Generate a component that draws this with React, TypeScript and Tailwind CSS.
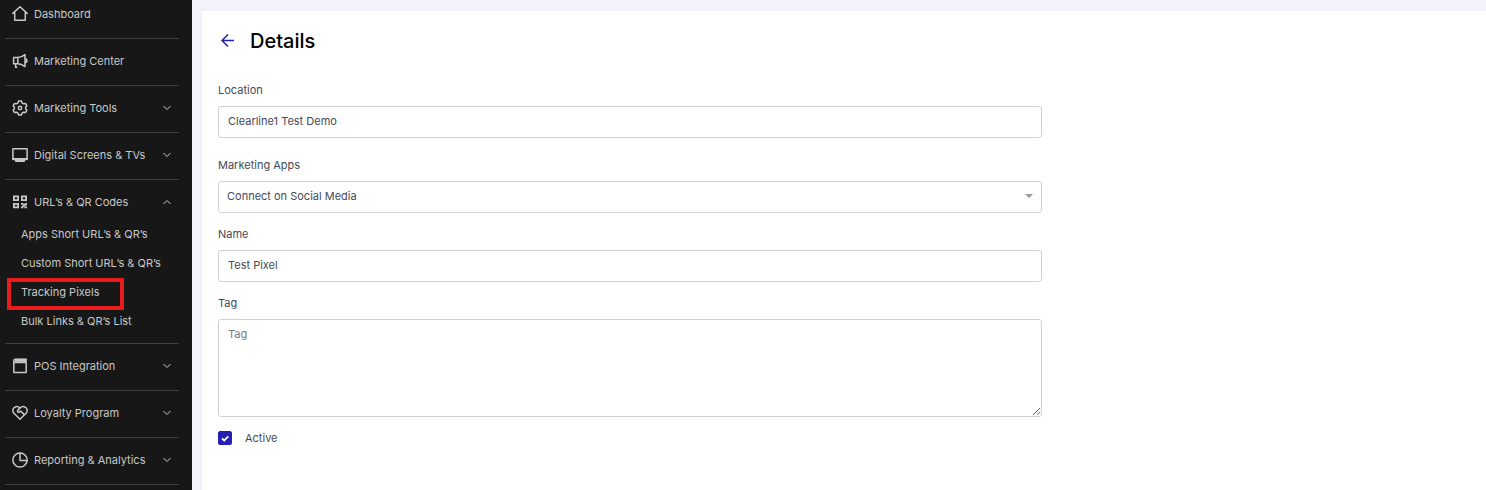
import { useState } from 'react';
import type { ReactNode } from 'react';

const Icon = ({ children }: { children: ReactNode }) => (
  <svg
    viewBox="0 0 16 16"
    className="size-4 shrink-0"
    fill="none"
    stroke="currentColor"
    strokeWidth="1.5"
    strokeLinecap="round"
    strokeLinejoin="round"
    aria-hidden="true"
  >
    {children}
  </svg>
);

const HouseIcon = () => (
  <Icon>
    <path d="M0.8 7.4 8 0.8l7.2 6.6M2.7 6v8.3h10.6V6" />
  </Icon>
);

const MegaphoneIcon = () => (
  <Icon>
    <path d="M1.6 4.4h4.2v6.4H1.6zM5.8 4.4c3 0 5.2-1.2 7.2-2.8v12c-2-1.6-4.2-2.8-7.2-2.8M13 5.8a1.9 1.9 0 0 1 0 3.8M3.6 10.8v3.4h1.2" />
  </Icon>
);

const GearIcon = () => (
  <Icon>
    <path d="M6.6 1h2.8l.6 1.9 1.5.9 2-.4 1.4 2.4-1.3 1.4v1.6l1.3 1.4-1.4 2.4-2-.4-1.5.9-.6 1.9H6.6L6 13.1l-1.5-.9-2 .4-1.4-2.4 1.3-1.4V7.2L1.1 5.8l1.4-2.4 2 .4L6 2.9z" />
    <circle cx="8" cy="8" r="1.7" />
  </Icon>
);

const ScreenIcon = () => (
  <Icon>
    <path d="M0.9 1.7h14.2v10.6H.9z" />
    <path d="M1.4 12.2h13.2M4 14h8" strokeWidth="2.2" />
  </Icon>
);

const QrIcon = () => (
  <Icon>
    <g strokeWidth="1.8" strokeLinejoin="miter" strokeLinecap="butt">
      <path d="M1.9 2.4h4.2v3.8H1.9zM9.9 2.4h4.2v3.8H9.9zM1.9 9.8h4.2v3.6H1.9z" />
      <path d="M9 9.9h2.6M14.1 9v2.4M9.4 14l4.8-4.6M12.4 13.4H15M11 11.5h2" />
    </g>
  </Icon>
);

const RegisterIcon = () => (
  <Icon>
    <path d="M1.8 4.6h12.4v9.8H1.8zM1.8 4.6V3.2c0-1.2.6-1.9 1.6-1.9h10.8" />
    <path d="M3 2.4h11.8" strokeWidth="3" strokeLinecap="butt" />
  </Icon>
);

const HeartIcon = () => (
  <Icon>
    <path d="M8 14.2 1.5 7.8C.3 6 .7 3.5 2.5 2.4 4.3 1.3 6.6 1.6 8 3c1.4-1.4 3.7-1.7 5.5-.6 1.8 1.1 2.2 3.6 1 5.4z" />
    <path d="M8 3 5.6 5.4c-.4 1 .3 2 1.4 1.9L8.600 6l3.600 3.600" />
  </Icon>
);

const PieIcon = () => (
  <Icon>
    <circle cx="8" cy="8" r="7.1" />
    <path d="M8 1v7.4h7" />
  </Icon>
);

const Chevron = ({ up }: { up?: boolean }) => (
  <svg
    viewBox="0 0 8 8"
    className="size-2 shrink-0"
    fill="none"
    stroke="currentColor"
    strokeWidth="1"
    aria-hidden="true"
  >
    <path d={up ? 'M0.5 6 4 2.5 7.5 6' : 'M0.5 2 4 5.5 7.5 2'} />
  </svg>
);

const rowClass = 'flex w-full items-center gap-[6px] pl-[7px] pr-2 text-left';

const LinkRow = ({ icon, label }: { icon: ReactNode; label: string }) => (
  <a href="#" className={rowClass}>
    {icon}
    {label}
  </a>
);

const MenuRow = ({
  icon,
  label,
  open,
  children,
}: {
  icon: ReactNode;
  label: string;
  open?: boolean;
  children?: ReactNode;
}) => {
  const [expanded, setExpanded] = useState(!!open);

  return (
    <>
      <button
        type="button"
        aria-expanded={expanded}
        onClick={() => setExpanded(!expanded)}
        className={rowClass}
      >
        {icon}
        <span className="flex-1">{label}</span>
        <Chevron up={expanded} />
      </button>
      {expanded && children}
    </>
  );
};

const itemClass = 'border-b border-[#404040] pt-[14px] pb-4';
const subLinkClass = 'flex h-[29px] items-center pl-4';

const SideBar = () => (
  <aside className="w-48 shrink-0 bg-[#171717] pr-[13px] pl-[5px] text-[11px] leading-4 text-[#c8c8c8]">
    <nav>
      <ul>
        <li className="border-b border-[#404040] pt-[6px] pb-4">
          <LinkRow icon={<HouseIcon />} label="Dashboard" />
        </li>
        <li className={itemClass}>
          <LinkRow icon={<MegaphoneIcon />} label="Marketing Center" />
        </li>
        <li className={itemClass}>
          <MenuRow icon={<GearIcon />} label="Marketing Tools" />
        </li>
        <li className={itemClass}>
          <MenuRow icon={<ScreenIcon />} label="Digital Screens & TVs" />
        </li>
        <li className="border-b border-[#404040] pt-[14px] pb-2">
          <MenuRow icon={<QrIcon />} label="URL’s & QR Codes" open>
            <ul className="pt-[9px]">
              <li>
                <a href="#" className={subLinkClass}>
                  Apps Short URL’s & QR’s
                </a>
              </li>
              <li>
                <a href="#" className={subLinkClass}>
                  Custom Short URL’s & QR’s
                </a>
              </li>
              <li className="relative">
                <a href="#" className={subLinkClass}>
                  Tracking Pixels
                </a>
                <span className="pointer-events-none absolute top-px left-[2px] h-8 w-[117px] border-4 border-[#e81c1c]" />
              </li>
              <li>
                <a href="#" className={subLinkClass}>
                  Bulk Links & QR’s List
                </a>
              </li>
            </ul>
          </MenuRow>
        </li>
        <li className={itemClass}>
          <MenuRow icon={<RegisterIcon />} label="POS Integration" />
        </li>
        <li className={itemClass}>
          <MenuRow icon={<HeartIcon />} label="Loyalty Program" />
        </li>
        <li className={itemClass}>
          <MenuRow icon={<PieIcon />} label="Reporting & Analytics" />
        </li>
      </ul>
    </nav>
  </aside>
);

const labelClass = 'mb-2 block';
const fieldClass = 'block w-full rounded-[3px] border border-[#cfd1da] bg-white outline-none';

const DetailsForm = () => {
  const [active, setActive] = useState(true);

  return (
    <form className="w-2/3 text-[11px] leading-4 text-[#454a54]">
      <div className="mb-[19px]">
        <label htmlFor="location" className={labelClass}>
          Location
        </label>
        <input id="location" type="text" defaultValue="Clearline1 Test Demo" className={`${fieldClass} h-8 px-[9px] pb-[2px]`} />
      </div>
      <div className="mb-[13px]">
        <label htmlFor="apps" className={labelClass}>
          Marketing Apps
        </label>
        <div className="relative">
          <select id="apps" className={`${fieldClass} h-8 appearance-none px-2 pb-[2px]`}>
            <option>Connect on Social Media</option>
          </select>
          <svg
            viewBox="0 0 8 4"
            className="pointer-events-none absolute top-[13px] right-[9px] h-1 w-2"
            fill="#999"
            aria-hidden="true"
          >
            <path d="M0 0h8L4 4z" />
          </svg>
        </div>
      </div>
      <div className="mb-[13px]">
        <label htmlFor="name" className={labelClass}>
          Name
        </label>
        <input id="name" type="text" defaultValue="Test Pixel" className={`${fieldClass} h-8 px-[9px] pb-[2px]`} />
      </div>
      <div className="mb-[13px]">
        <label htmlFor="tag" className={labelClass}>
          Tag
        </label>
        <textarea
          id="tag"
          placeholder="Tag"
          className={`${fieldClass} h-[98px] resize px-[9px] py-[6px] placeholder:text-[#757a8a]`}
        />
      </div>
      <label className="flex items-center gap-[13px]">
        <span className="relative size-[14px]">
          <input
            type="checkbox"
            checked={active}
            onChange={(e) => setActive(e.target.checked)}
            className="block size-[14px] appearance-none rounded-[2px] border border-[#251fb3] checked:bg-[#251fb3]"
          />
          {active && (
            <svg
              viewBox="0 0 14 14"
              className="pointer-events-none absolute inset-0"
              fill="none"
              stroke="#fff"
              strokeWidth="1.8"
              aria-hidden="true"
            >
              <path d="M4 7.4 6.2 9.5 10.3 5.3" />
            </svg>
          )}
        </span>
        Active
      </label>
    </form>
  );
};

const App = () => {
  return (
    <div className="flex h-screen overflow-hidden bg-[#f3f2fa] font-[Inter,sans-serif]">
      <SideBar />
      <main className="mt-[11px] ml-[10px] flex-1 bg-white pt-4 pr-8 pl-4">
        <header className="mb-[27px] flex items-center gap-[13px]">
          <a href="#" aria-label="Back" className="pl-[3px] text-[#251fb3]">
            <svg
              viewBox="0 0 16 16"
              className="size-4"
              fill="none"
              stroke="currentColor"
              strokeWidth="1.5"
              aria-hidden="true"
            >
              <path d="M13 7.500H1M7 1.500l-6 6 6 6" />
            </svg>
          </a>
          <h1 className="text-xl font-medium text-black">Details</h1>
        </header>
        <DetailsForm />
      </main>
    </div>
  );
};

export default App;
